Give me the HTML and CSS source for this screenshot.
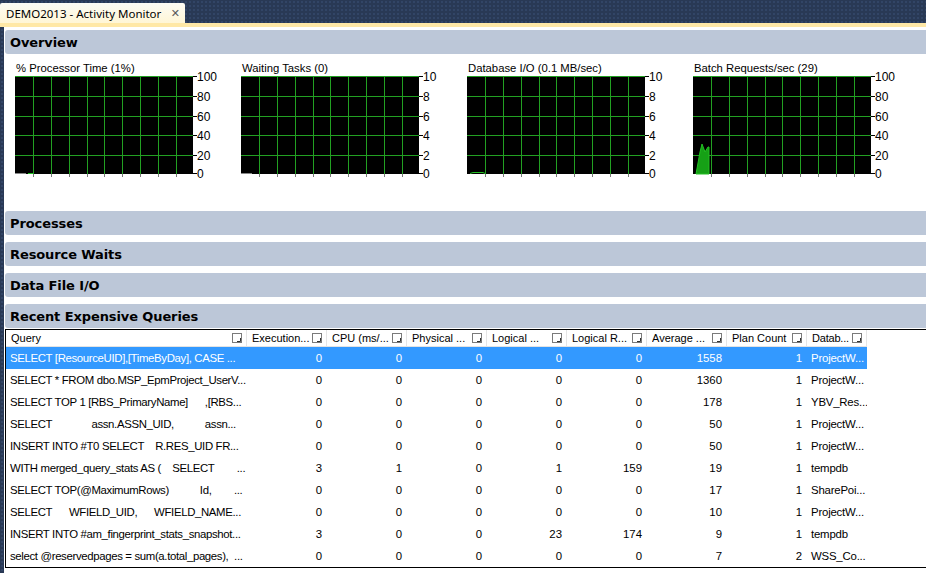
FILE: index.html
```html
<!DOCTYPE html>
<html>
<head>
<meta charset="utf-8">
<link rel="stylesheet" href="styles.css">
</head>
<body>
<div class="tabbar">
  <div class="tab"><span class="tab-title">DEMO2013 - Activity Monitor</span><span class="close">✕</span></div>
</div>
<div class="strip"></div>
<div class="frame">
  <div class="content">
    <section class="sec">
      <div class="hdr">Overview</div>
      <div class="charts">
        <div class="chart">
          <div class="chart-title">% Processor Time (1%)</div>
          <svg class="plot" width="226" height="104" viewBox="0 0 226 104">
            <rect x="0" y="0" width="178" height="98" fill="#000"/>
            <g stroke="#22a022" stroke-width="1">
              <path d="M0 0.5H178M0 20.5H178M0 40.5H178M0 59.5H178M0 79.5H178"/>
              <path d="M18.5 0V98M36.5 0V98M54.5 0V98M72.5 0V98M89.5 0V98M107.5 0V98M125.5 0V98M143.5 0V98M161.5 0V98"/>
            </g>
            <path d="M0 97.5H11" stroke="#888"/>
            <path d="M13 97.5H18" stroke="#22c022"/>
            <g stroke="#777"><path d="M18.5 98V101M36.5 98V101M54.5 98V101M72.5 98V101M89.5 98V101M107.5 98V101M125.5 98V101M143.5 98V101M161.5 98V101"/></g>
            <g stroke="#000"><path d="M178 0.5H182M178 20.5H182M178 40.5H182M178 59.5H182M178 79.5H182M178 97.5H182"/></g>
            <g class="axis"><text x="182" y="5">100</text><text x="182" y="25">80</text><text x="182" y="45">60</text><text x="182" y="64">40</text><text x="182" y="84">20</text><text x="182" y="102">0</text></g>
          </svg>
        </div>
        <div class="chart">
          <div class="chart-title">Waiting Tasks (0)</div>
          <svg class="plot" width="226" height="104" viewBox="0 0 226 104">
            <rect x="0" y="0" width="178" height="98" fill="#000"/>
            <g stroke="#22a022" stroke-width="1">
              <path d="M0 0.5H178M0 20.5H178M0 40.5H178M0 59.5H178M0 79.5H178"/>
              <path d="M18.5 0V98M36.5 0V98M54.5 0V98M72.5 0V98M89.5 0V98M107.5 0V98M125.5 0V98M143.5 0V98M161.5 0V98"/>
            </g>
            <path d="M0 97.5H11" stroke="#888"/>
            <g stroke="#777"><path d="M18.5 98V101M36.5 98V101M54.5 98V101M72.5 98V101M89.5 98V101M107.5 98V101M125.5 98V101M143.5 98V101M161.5 98V101"/></g>
            <g stroke="#000"><path d="M178 0.5H182M178 20.5H182M178 40.5H182M178 59.5H182M178 79.5H182M178 97.5H182"/></g>
            <g class="axis"><text x="182" y="5">10</text><text x="182" y="25">8</text><text x="182" y="45">6</text><text x="182" y="64">4</text><text x="182" y="84">2</text><text x="182" y="102">0</text></g>
          </svg>
        </div>
        <div class="chart">
          <div class="chart-title">Database I/O (0.1 MB/sec)</div>
          <svg class="plot" width="226" height="104" viewBox="0 0 226 104">
            <rect x="0" y="0" width="178" height="98" fill="#000"/>
            <g stroke="#22a022" stroke-width="1">
              <path d="M0 0.5H178M0 20.5H178M0 40.5H178M0 59.5H178M0 79.5H178"/>
              <path d="M18.5 0V98M36.5 0V98M54.5 0V98M72.5 0V98M89.5 0V98M107.5 0V98M125.5 0V98M143.5 0V98M161.5 0V98"/>
            </g>
            <path d="M3 97.5L6 96.5H16L18 97.5" stroke="#22c022" fill="none"/>
            <g stroke="#777"><path d="M18.5 98V101M36.5 98V101M54.5 98V101M72.5 98V101M89.5 98V101M107.5 98V101M125.5 98V101M143.5 98V101M161.5 98V101"/></g>
            <g stroke="#000"><path d="M178 0.5H182M178 20.5H182M178 40.5H182M178 59.5H182M178 79.5H182M178 97.5H182"/></g>
            <g class="axis"><text x="182" y="5">10</text><text x="182" y="25">8</text><text x="182" y="45">6</text><text x="182" y="64">4</text><text x="182" y="84">2</text><text x="182" y="102">0</text></g>
          </svg>
        </div>
        <div class="chart">
          <div class="chart-title">Batch Requests/sec (29)</div>
          <svg class="plot" width="226" height="104" viewBox="0 0 226 104">
            <rect x="0" y="0" width="178" height="98" fill="#000"/>
            <g stroke="#22a022" stroke-width="1">
              <path d="M0 0.5H178M0 20.5H178M0 40.5H178M0 59.5H178M0 79.5H178"/>
              <path d="M18.5 0V98M36.5 0V98M54.5 0V98M72.5 0V98M89.5 0V98M107.5 0V98M125.5 0V98M143.5 0V98M161.5 0V98"/>
            </g>
            <polygon points="3,98 7,76 9,68 12,76 15,71 16,71 16,98" fill="#16a016" stroke="#22c022" stroke-width="1"/>
            <g stroke="#777"><path d="M18.5 98V101M36.5 98V101M54.5 98V101M72.5 98V101M89.5 98V101M107.5 98V101M125.5 98V101M143.5 98V101M161.5 98V101"/></g>
            <g stroke="#000"><path d="M178 0.5H182M178 20.5H182M178 40.5H182M178 59.5H182M178 79.5H182M178 97.5H182"/></g>
            <g class="axis"><text x="182" y="5">100</text><text x="182" y="25">80</text><text x="182" y="45">60</text><text x="182" y="64">40</text><text x="182" y="84">20</text><text x="182" y="102">0</text></g>
          </svg>
        </div>
      </div>
    </section>
    <section class="sec"><div class="hdr">Processes</div></section>
    <section class="sec"><div class="hdr">Resource Waits</div></section>
    <section class="sec"><div class="hdr">Data File I/O</div></section>
    <section class="sec last">
      <div class="hdr">Recent Expensive Queries</div>
      <div class="grid">
        <div class="row head">
          <div class="c c-q"><span>Query</span><svg class="fi" width="10" height="10" viewBox="0 0 10 10"><rect x="0.5" y="0.5" width="9" height="9" fill="#fff" stroke="#7a7a7a"/><path d="M5 8.5H8.5V5" fill="none" stroke="#333"/></svg></div>
          <div class="c"><span>Execution...</span><svg class="fi" width="10" height="10" viewBox="0 0 10 10"><rect x="0.5" y="0.5" width="9" height="9" fill="#fff" stroke="#7a7a7a"/><path d="M5 8.5H8.5V5" fill="none" stroke="#333"/></svg></div>
          <div class="c"><span>CPU (ms/...</span><svg class="fi" width="10" height="10" viewBox="0 0 10 10"><rect x="0.5" y="0.5" width="9" height="9" fill="#fff" stroke="#7a7a7a"/><path d="M5 8.5H8.5V5" fill="none" stroke="#333"/></svg></div>
          <div class="c"><span>Physical ...</span><svg class="fi" width="10" height="10" viewBox="0 0 10 10"><rect x="0.5" y="0.5" width="9" height="9" fill="#fff" stroke="#7a7a7a"/><path d="M5 8.5H8.5V5" fill="none" stroke="#333"/></svg></div>
          <div class="c"><span>Logical ...</span><svg class="fi" width="10" height="10" viewBox="0 0 10 10"><rect x="0.5" y="0.5" width="9" height="9" fill="#fff" stroke="#7a7a7a"/><path d="M5 8.5H8.5V5" fill="none" stroke="#333"/></svg></div>
          <div class="c"><span>Logical R...</span><svg class="fi" width="10" height="10" viewBox="0 0 10 10"><rect x="0.5" y="0.5" width="9" height="9" fill="#fff" stroke="#7a7a7a"/><path d="M5 8.5H8.5V5" fill="none" stroke="#333"/></svg></div>
          <div class="c"><span>Average ...</span><svg class="fi" width="10" height="10" viewBox="0 0 10 10"><rect x="0.5" y="0.5" width="9" height="9" fill="#fff" stroke="#7a7a7a"/><path d="M5 8.5H8.5V5" fill="none" stroke="#333"/></svg></div>
          <div class="c"><span>Plan Count</span><svg class="fi" width="10" height="10" viewBox="0 0 10 10"><rect x="0.5" y="0.5" width="9" height="9" fill="#fff" stroke="#7a7a7a"/><path d="M5 8.5H8.5V5" fill="none" stroke="#333"/></svg></div>
          <div class="c c-db"><span>Datab...</span><svg class="fi" width="10" height="10" viewBox="0 0 10 10"><rect x="0.5" y="0.5" width="9" height="9" fill="#fff" stroke="#7a7a7a"/><path d="M5 8.5H8.5V5" fill="none" stroke="#333"/></svg></div>
        </div>
        <div class="row sel"><div class="c c-q">SELECT [ResourceUID],[TimeByDay], CASE ...</div><div class="c n">0</div><div class="c n">0</div><div class="c n">0</div><div class="c n">0</div><div class="c n">0</div><div class="c n">1558</div><div class="c n">1</div><div class="c c-db">ProjectW...</div></div>
        <div class="row"><div class="c c-q">SELECT * FROM dbo.MSP_EpmProject_UserV...</div><div class="c n">0</div><div class="c n">0</div><div class="c n">0</div><div class="c n">0</div><div class="c n">0</div><div class="c n">1360</div><div class="c n">1</div><div class="c c-db">ProjectW...</div></div>
        <div class="row"><div class="c c-q">SELECT TOP 1 [RBS_PrimaryName]      ,[RBS...</div><div class="c n">0</div><div class="c n">0</div><div class="c n">0</div><div class="c n">0</div><div class="c n">0</div><div class="c n">178</div><div class="c n">1</div><div class="c c-db">YBV_Res...</div></div>
        <div class="row"><div class="c c-q">SELECT              assn.ASSN_UID,           assn...</div><div class="c n">0</div><div class="c n">0</div><div class="c n">0</div><div class="c n">0</div><div class="c n">0</div><div class="c n">50</div><div class="c n">1</div><div class="c c-db">ProjectW...</div></div>
        <div class="row"><div class="c c-q">INSERT INTO #T0 SELECT    R.RES_UID FR...</div><div class="c n">0</div><div class="c n">0</div><div class="c n">0</div><div class="c n">0</div><div class="c n">0</div><div class="c n">50</div><div class="c n">1</div><div class="c c-db">ProjectW...</div></div>
        <div class="row"><div class="c c-q">WITH merged_query_stats AS (    SELECT        ...</div><div class="c n">3</div><div class="c n">1</div><div class="c n">0</div><div class="c n">1</div><div class="c n">159</div><div class="c n">19</div><div class="c n">1</div><div class="c c-db">tempdb</div></div>
        <div class="row"><div class="c c-q">SELECT TOP(@MaximumRows)           Id,        ...</div><div class="c n">0</div><div class="c n">0</div><div class="c n">0</div><div class="c n">0</div><div class="c n">0</div><div class="c n">17</div><div class="c n">1</div><div class="c c-db">SharePoi...</div></div>
        <div class="row"><div class="c c-q">SELECT      WFIELD_UID,      WFIELD_NAME...</div><div class="c n">0</div><div class="c n">0</div><div class="c n">0</div><div class="c n">0</div><div class="c n">0</div><div class="c n">10</div><div class="c n">1</div><div class="c c-db">ProjectW...</div></div>
        <div class="row"><div class="c c-q">INSERT INTO #am_fingerprint_stats_snapshot...</div><div class="c n">3</div><div class="c n">0</div><div class="c n">0</div><div class="c n">23</div><div class="c n">174</div><div class="c n">9</div><div class="c n">1</div><div class="c c-db">tempdb</div></div>
        <div class="row"><div class="c c-q">select @reservedpages = sum(a.total_pages),  ...</div><div class="c n">0</div><div class="c n">0</div><div class="c n">0</div><div class="c n">0</div><div class="c n">0</div><div class="c n">7</div><div class="c n">2</div><div class="c c-db">WSS_Co...</div></div>
      </div>
    </section>
  </div>
</div>
</body>
</html>
```
FILE: styles.css
```css
html, body {
  margin: 0;
  padding: 0;
}
body {
  width: 926px;
  height: 573px;
  overflow: hidden;
  background-color: #293955;
  background-image: radial-gradient(#324566 0.8px, transparent 1px);
  background-size: 4px 4px;
  font-family: "Liberation Sans", Arial, sans-serif;
  font-size: 12px;
  color: #000;
}
.tabbar {
  height: 23px;
  display: flex;
  align-items: flex-end;
}
.tab {
  width: 185px;
  height: 20px;
  box-sizing: border-box;
  display: flex;
  align-items: center;
  padding-left: 6px;
  background: linear-gradient(#fdfcf5, #fff6d6);
  border-radius: 2px 2px 0 0;
  font-family: "Noto Sans", "Open Sans", sans-serif;
  font-size: 11.5px;
  color: #000;
}
.close {
  margin-left: auto;
  margin-right: 5px;
  font-family: "DejaVu Sans", sans-serif;
  font-size: 11px;
  color: #5a5a5a;
}
.strip {
  height: 4px;
  background: #ffe8a6;
}
.frame {
  padding-left: 4px;
  height: 546px;
}
.content {
  background: #fff;
  height: 546px;
  padding: 3px 0 0 1px;
  box-sizing: border-box;
  display: flex;
  flex-direction: column;
  gap: 7px;
  width: 960px;
}
.hdr {
  height: 24px;
  box-sizing: border-box;
  background: #bcc7d8;
  border-radius: 3px 0 0 3px;
  padding-left: 5px;
  display: flex;
  align-items: center;
  font-family: "DejaVu Sans", Verdana, sans-serif;
  font-weight: bold;
  font-size: 13px;
  letter-spacing: -0.1px;
  color: #000;
}
.charts {
  height: 150px;
  box-sizing: border-box;
  padding: 7px 0 0 10px;
  display: flex;
}
.chart {
  width: 226px;
  flex: none;
}
.chart-title {
  height: 15px;
  line-height: 14px;
  padding-left: 1px;
  font-size: 11.3px;
  white-space: nowrap;
}
.plot {
  display: block;
  overflow: visible;
}
.axis text {
  font-family: "Liberation Sans", Arial, sans-serif;
  font-size: 12px;
  fill: #000;
}
.last {
  display: flex;
  flex-direction: column;
}
.grid {
  margin-top: 1px;
  border-top: 1px solid #000;
  border-left: 1px solid #000;
  border-bottom: 1px solid #000;
  font-size: 11.4px;
}
.row {
  display: flex;
  width: 861px;
  height: 22px;
  line-height: 22px;
}
.row.head {
  height: 17px;
  line-height: 16px;
  box-sizing: border-box;
  border-bottom: 1px solid #e3e3e3;
  font-size: 11px;
}
.c {
  width: 80px;
  flex: none;
  box-sizing: border-box;
  white-space: pre;
  overflow: hidden;
  padding-left: 4px;
}
.c-q {
  width: 241px;
  letter-spacing: -0.35px;
}
.row.head .c-q { letter-spacing: 0; }
.c-db {
  width: 60px;
  letter-spacing: -0.2px;
}
.n {
  text-align: right;
  padding-right: 5px;
}
.head .c {
  display: flex;
  align-items: center;
  padding-left: 5px;
  padding-right: 4px;
  border-right: 1px solid #e5e5e5;
}
.head .c span {
  flex: 1;
  overflow: hidden;
}
.fi {
  flex: none;
  display: block;
}
.row.sel {
  background: #3399ff;
  color: #fff;
}
```
